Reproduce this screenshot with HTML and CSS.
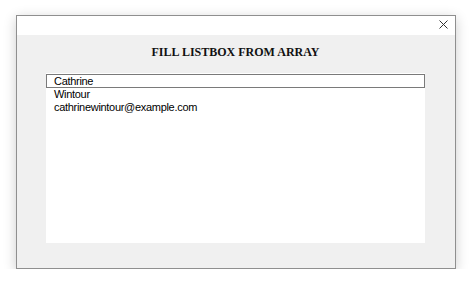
FILE: index.html
```html
<!DOCTYPE html>
<html>
<head>
<meta charset="utf-8">
<link rel="stylesheet" href="styles.css">
</head>
<body>
<div class="window">
  <div class="titlebar">
    <svg class="close" width="9" height="9" viewBox="0 0 9 9"><path d="M0.5 0.5 L8.5 8.5 M8.5 0.5 L0.5 8.5" stroke="#333" stroke-width="1" fill="none"/></svg>
  </div>
  <div class="content">
    <h1 class="heading">FILL LISTBOX FROM ARRAY</h1>
    <div class="listbox">
      <div class="item focused">Cathrine</div>
      <div class="item">Wintour</div>
      <div class="item">cathrinewintour@example.com</div>
    </div>
  </div>
</div>
</body>
</html>
```
FILE: styles.css
```css
html, body {
  margin: 0;
  padding: 0;
  background: #ffffff;
}
.window {
  margin: 15px 0 0 16px;
  width: 438px;
  height: 252px;
  border: 1px solid #8f8f8f;
  background: #f0f0f0;
  box-shadow: 0 3px 12px rgba(0,0,0,0.2);
  display: flex;
  flex-direction: column;
}
.titlebar {
  height: 19px;
  background: #ffffff;
  display: flex;
  justify-content: flex-end;
  align-items: flex-start;
  padding-right: 7px;
}
.close {
  display: block;
  margin-top: 4px;
}
.content {
  flex: 1;
  display: flex;
  flex-direction: column;
  padding: 0 30px 0 29px;
}
.heading {
  margin: 10px 0 0 0;
  height: 28px;
  font-family: "Liberation Serif", "Times New Roman", serif;
  font-weight: bold;
  font-size: 12px;
  line-height: 14px;
  text-align: center;
  color: #111;
}
.listbox {
  height: 170px;
  background: #ffffff;
  font-family: "Liberation Sans", Arial, sans-serif;
  font-size: 11px;
  letter-spacing: -0.3px;
  color: #000;
}
.item {
  height: 13px;
  line-height: 13px;
  padding-left: 8px;
  white-space: nowrap;
}
.item.focused {
  height: 12px;
  line-height: 12px;
  border: 1px solid #7a7a7a;
  margin-top: 1px;
  padding-left: 7px;
}
```
